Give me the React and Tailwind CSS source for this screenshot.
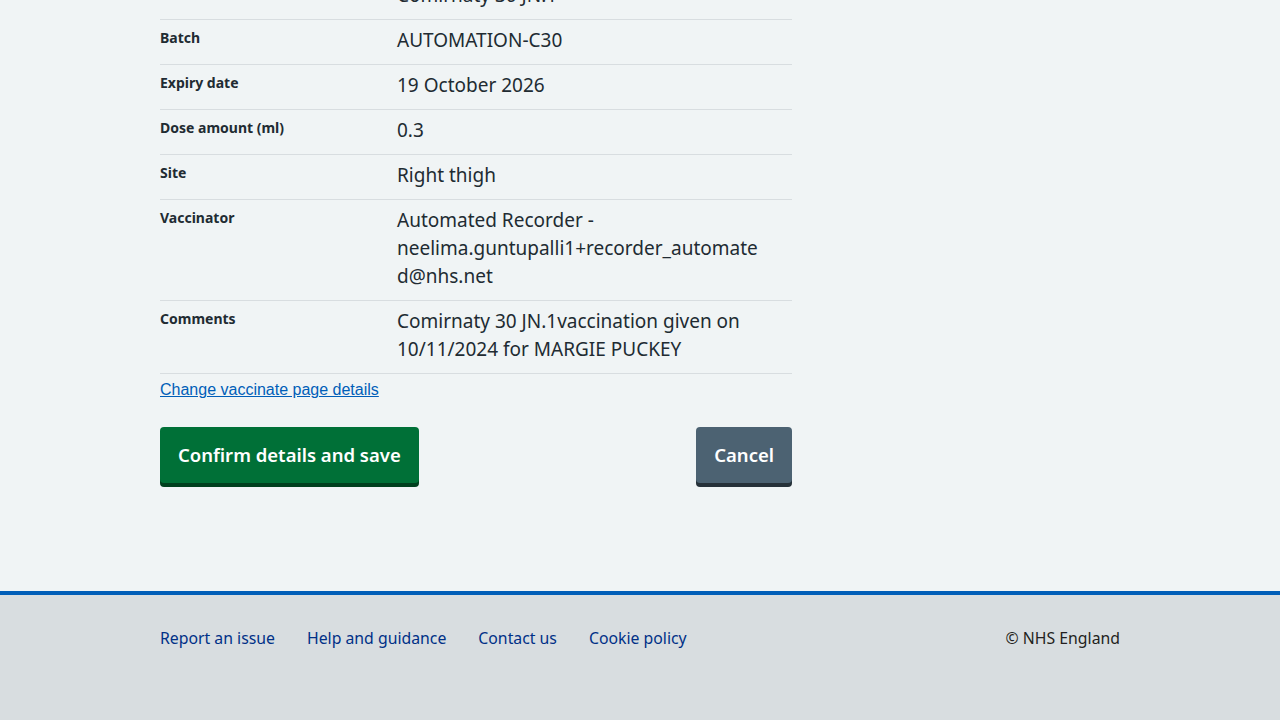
const rows = [
  { label: "Vaccine", value: ["Comirnaty 30 JN.1"] },
  { label: "Batch", value: ["AUTOMATION-C30"] },
  { label: "Expiry date", value: ["19 October 2026"] },
  { label: "Dose amount (ml)", value: ["0.3"] },
  { label: "Site", value: ["Right thigh"] },
  {
    label: "Vaccinator",
    value: ["Automated Recorder -", "neelima.guntupalli1+recorder_automate", "d@nhs.net"],
  },
  {
    label: "Comments",
    value: ["Comirnaty 30 JN.1vaccination given on", "10/11/2024 for MARGIE PUCKEY"],
  },
];

const footerLinks = ["Report an issue", "Help and guidance", "Contact us", "Cookie policy"];

const App = () => {
  return (
    <div className="min-h-screen bg-[#f0f4f5] text-[#212b32] font-['Noto_Sans',sans-serif] flex flex-col overflow-hidden h-[720px]">
      <main className="flex-1 px-[160px]">
        <div className="w-[632px] -mt-[25px]">
          <dl>
            {rows.map((row) => (
              <div key={row.label} className="flex border-b border-[#d8dde0] py-2">
                <dt className="w-[237px] text-[14px] leading-5 font-bold">{row.label}</dt>
                <dd className="flex-1 text-[19px] leading-7 -mt-[2px] mb-[2px]">
                  {row.value.map((line) => (
                    <div key={line}>{line}</div>
                  ))}
                </dd>
              </div>
            ))}
          </dl>
          <a
            href="#"
            className="inline-block mt-[6px] text-[16px] leading-5 text-[#005eb8] underline font-['Liberation_Sans',Arial,sans-serif]"
          >
            Change vaccinate page details
          </a>
          <div className="flex justify-between mt-[26px]">
            <button className="h-[56px] px-[18px] rounded-[4px] bg-[#007037] text-white text-[18.5px] font-semibold shadow-[0_4px_0_#00401e]">
              Confirm details and save
            </button>
            <button className="h-[56px] px-[18px] rounded-[4px] bg-[#4c6272] text-white text-[18.5px] font-semibold shadow-[0_4px_0_#263139]">
              Cancel
            </button>
          </div>
        </div>
      </main>
      <footer className="h-[129px] border-t-4 border-[#005eb8] bg-[#d8dde0] px-[160px] pt-[31px]">
        <div className="flex justify-between items-center text-[15.8px] leading-6">
          <ul className="flex gap-8">
            {footerLinks.map((l) => (
              <li key={l}>
                <a href="#" className="text-[#003087]">{l}</a>
              </li>
            ))}
          </ul>
          <p className="text-[#231f20]">© NHS England</p>
        </div>
      </footer>
    </div>
  );
};

export default App;
